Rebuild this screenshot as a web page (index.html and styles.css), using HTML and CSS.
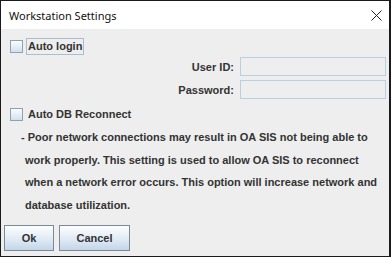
FILE: index.html
```html
<!DOCTYPE html>
<html lang="en">
<head>
    <meta charset="UTF-8">
    <meta name="viewport" content="width=device-width, initial-scale=1.0">
    <title>Workstation Settings</title>
    <link rel="stylesheet" href="styles.css">
</head>
<body>
    <div class="window">
        <div class="titlebar">
            <span class="title">Workstation Settings</span>
            <svg class="close" width="11" height="11" viewBox="0 0 11 11">
                <path d="M0.5 0.5 L10.5 10.5 M10.5 0.5 L0.5 10.5" stroke="#222" stroke-width="1" fill="none"/>
            </svg>
        </div>
        <div class="content">
            <div class="check-row first">
                <span class="box"></span>
                <span class="check-label focused">Auto login</span>
            </div>
            <div class="fields">
                <label for="user-id">User ID:</label>
                <input type="text" id="user-id" disabled>
                <label for="password">Password:</label>
                <input type="password" id="password" disabled>
            </div>
            <div class="check-row">
                <span class="box"></span>
                <span class="check-label">Auto DB Reconnect</span>
            </div>
            <p class="note">- Poor network connections may result in OA SIS not being able to<br>work properly. This setting is used to allow OA SIS to reconnect<br>when a network error occurs. This option will increase network and<br>database utilization.</p>
            <div class="buttons">
                <button class="ok">Ok</button>
                <button class="cancel">Cancel</button>
            </div>
        </div>
    </div>
</body>
</html>
```

FILE: styles.css
```css
body {
    margin: 0;
    font-family: "Liberation Sans", Arial, sans-serif;
}
.window {
    width: 391px;
    height: 257px;
    box-sizing: border-box;
    border: 1px solid #1a1a1a;
    border-right-width: 2px;
    background-color: #eeeeee;
    display: flex;
    flex-direction: column;
}
.titlebar {
    height: 28px;
    flex: none;
    background-color: white;
    display: flex;
    align-items: center;
    justify-content: space-between;
    padding: 0 7px 0 8px;
}
.title {
    font-family: "Noto Sans", sans-serif;
    font-size: 11px;
    color: #111;
}
.close {
    margin-top: 1px;
}
.content {
    flex: 1;
    color: #333333;
    font-size: 11px;
    font-weight: bold;
}
.check-row {
    display: flex;
    align-items: center;
    height: 17px;
    padding-left: 9px;
    margin-top: 7px;
}
.check-row.first {
    margin-top: 9px;
}
.box {
    width: 11px;
    height: 11px;
    border: 1px solid #8ea2b6;
    background: linear-gradient(#fafcfe, #d3e0ec);
    margin-right: 3px;
}
.check-label {
    padding: 1px;
    border: 1px solid transparent;
    line-height: 13px;
}
.check-label.focused {
    border-color: #a8bed3;
}
.fields {
    display: grid;
    grid-template-columns: 1fr 146px;
    column-gap: 6px;
    row-gap: 4px;
    align-items: center;
    padding-right: 3px;
    margin-top: 2px;
}
.fields label {
    text-align: right;
}
.fields input {
    height: 19px;
    box-sizing: border-box;
    border: 1px solid #b8cfe5;
    background-color: #eeeeee;
    margin: 0;
}
.note {
    margin: 3px 0 0 0;
    padding-left: 24px;
    text-indent: -4px;
    line-height: 22.5px;
    white-space: nowrap;
}
.buttons {
    display: flex;
    gap: 5px;
    padding-left: 3px;
    margin-top: 9px;
}
button {
    height: 26px;
    border: 1px solid #7a8a99;
    background: linear-gradient(#fdfeff, #dde8f3 60%, #c3d5e8);
    font-family: "Liberation Sans", Arial, sans-serif;
    font-size: 11px;
    font-weight: bold;
    color: #333333;
    padding: 0;
}
.ok {
    width: 50px;
}
.cancel {
    width: 71px;
}
```
